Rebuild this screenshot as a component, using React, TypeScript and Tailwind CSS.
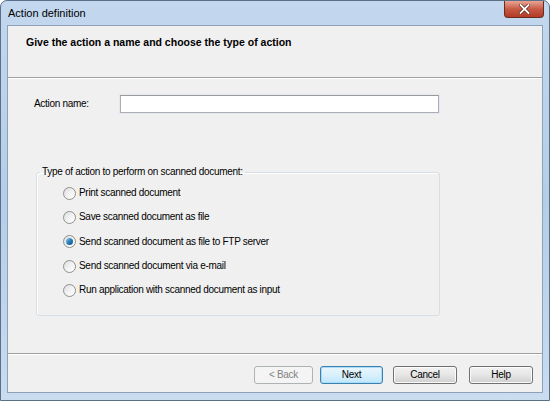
import React from 'react'

const font = { fontFamily: '"Liberation Sans", Arial, sans-serif' }

function Radio({ label, checked }: { label: string; checked?: boolean }) {
  return (
    <div className="flex h-[24.3px] items-center">
      <div className="flex h-[13px] w-[13px] items-center justify-center rounded-full border border-[#8e8f8f] bg-gradient-to-br from-[#dcdcdc] via-[#f2f2f2] to-[#ffffff]">
        {checked && (
          <div className="h-[7px] w-[7px] rounded-full bg-gradient-to-br from-[#8ad0f2] via-[#2a7fb8] to-[#0c4f86]" />
        )}
      </div>
      <span className="ml-[3px] text-[10px] leading-none tracking-[-0.3px] text-black">{label}</span>
    </div>
  )
}

function Button({ label, w, variant }: { label: string; w: string; variant?: 'default' | 'disabled' }) {
  const base = 'flex h-[18px] items-center justify-center rounded-[3px] border text-[10px] leading-none tracking-[-0.3px]'
  if (variant === 'disabled') {
    return (
      <div className={`${base} ${w} border-[#adb2b5] bg-[#f4f4f4] text-[#838383]`}>{label}</div>
    )
  }
  if (variant === 'default') {
    return (
      <div className={`${base} ${w} border-[#3c7fb1] bg-gradient-to-b from-[#eaf6fd] via-[#d9f0fc] to-[#bee6fd] text-black shadow-[inset_0_0_0_1px_#a9dcf6]`}>
        {label}
      </div>
    )
  }
  return (
    <div className={`${base} ${w} border-[#707070] bg-gradient-to-b from-[#f2f2f2] via-[#e6e6e6] to-[#cfcfcf] text-black shadow-[inset_0_0_0_1px_#fbfbfb]`}>
      {label}
    </div>
  )
}

export default function App() {
  const options = [
    'Print scanned document',
    'Save scanned document as file',
    'Send scanned document as file to FTP server',
    'Send scanned document via e-mail',
    'Run application with scanned document as input',
  ]

  return (
    <div
      style={font}
      className="flex h-[401px] w-[550px] flex-col overflow-hidden rounded-t-[7px] border border-[#5a6f88] bg-gradient-to-b from-[#c3d8ee] via-[#b5cde7] to-[#c9dcf0]"
    >
      {/* Title bar */}
      <div className="flex h-[24px] shrink-0 items-start justify-between">
        <span className="ml-[7px] mt-[7px] text-[11px] leading-none text-black">Action definition</span>
        <div className="mr-[5px] flex h-[17px] w-[40px] items-center justify-center rounded-b-[4px] border border-t-0 border-[#6b2a22] bg-gradient-to-b from-[#e8a595] via-[#c75a45] to-[#b23a26]">
          <svg width="11" height="10" viewBox="0 0 11 10">
            <path d="M1.5 1 L9.5 9 M9.5 1 L1.5 9" stroke="#5a1f17" strokeWidth="3.2" strokeLinecap="square" />
            <path d="M1.5 1 L9.5 9 M9.5 1 L1.5 9" stroke="#ffffff" strokeWidth="1.8" strokeLinecap="square" />
          </svg>
        </div>
      </div>

      {/* Client area */}
      <div className="mx-[6px] mb-[7px] flex flex-1 flex-col border border-[#8da2ba] bg-[#f0f0f0]">
        {/* Header */}
        <div className="flex h-[52px] shrink-0 items-start border-b border-[#a0a0a0] pl-[18px] pt-[11px] shadow-[0_1px_0_#ffffff]">
          <span className="text-[10.5px] font-bold leading-none text-black">
            Give the action a name and choose the type of action
          </span>
        </div>

        {/* Action name */}
        <div className="mt-[17px] flex h-[18px] items-center">
          <span className="ml-[26px] w-[86px] text-[10px] leading-none tracking-[-0.3px] text-black">Action name:</span>
          <div className="h-[18px] w-[319px] border border-[#abadb3] border-t-[#9a9a9a] bg-white shadow-[0_0_0_1px_#e3e9ef]" />
        </div>

        {/* Group box */}
        <fieldset className="ml-[28px] mt-[52px] h-[151px] w-[404px] rounded-[3px] border border-[#d5dfe5] p-0 shadow-[inset_1px_1px_0_#ffffff]">
          <legend className="ml-[3px] px-[2px] text-[10px] leading-[14px] tracking-[-0.3px] text-black">
            Type of action to perform on scanned document:
          </legend>
          <div className="pl-[26px] pt-[2px]">
            {options.map((o, i) => (
              <Radio key={o} label={o} checked={i === 2} />
            ))}
          </div>
        </fieldset>

        {/* Footer */}
        <div className="mt-auto border-t border-[#a0a0a0] shadow-[inset_0_1px_0_#ffffff]">
          <div className="flex justify-end pb-[8px] pr-[9px] pt-[12px]">
            <Button label="< Back" w="w-[59px]" variant="disabled" />
            <div className="w-[7px]" />
            <Button label="Next" w="w-[63px]" variant="default" />
            <div className="w-[10px]" />
            <Button label="Cancel" w="w-[64px]" />
            <div className="w-[12px]" />
            <Button label="Help" w="w-[64px]" />
          </div>
        </div>
      </div>
    </div>
  )
}
